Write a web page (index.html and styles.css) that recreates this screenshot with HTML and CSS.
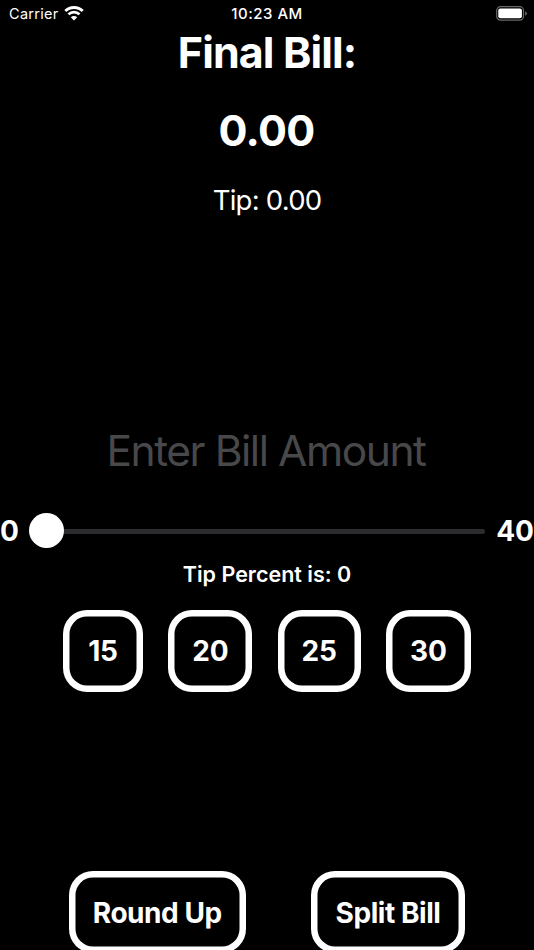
FILE: index.html
```html
<!DOCTYPE html>
<html lang="en">
<head>
<meta charset="utf-8">
<title>Tip Calculator</title>
<link rel="stylesheet" href="styles.css">
</head>
<body>
<main class="screen">
  <header class="status">
    <div class="network">
      <span class="carrier">Carrier</span>
      <svg class="wifi" viewBox="0 0 20 15" width="20" height="15">
        <path d="M1.3 5.1A12.3 12.3 0 0 1 18.7 5.1M4.5 8.4A7.6 7.6 0 0 1 15.5 8.4" fill="none" stroke="#fff" stroke-width="2.8"/>
        <path d="M6.8 11.3A4.6 4.6 0 0 1 13.2 11.3L10 14.6Z" fill="#fff"/>
      </svg>
    </div>
    <span class="clock">10:23 AM</span>
    <svg class="battery" viewBox="0 0 32 15" width="32" height="15">
      <rect x=".7" y=".7" width="26.8" height="13.4" rx="3.8" fill="none" stroke="#69696b" stroke-width="1.2"/>
      <rect x="2.3" y="2.5" width="23.6" height="9.8" rx="2" fill="#fff"/>
      <path d="M29.2 5.2Q31 6 31 7.4T29.2 9.7Z" fill="#69696b"/>
    </svg>
  </header>
  <h1 class="title">Final Bill:</h1>
  <div class="total">0.00</div>
  <div class="tip">Tip: 0.00</div>
  <div class="amount">Enter Bill Amount</div>
  <div class="slider">
    <span class="bound">0</span>
    <div class="track"><div class="thumb"></div></div>
    <span class="bound max">40</span>
  </div>
  <div class="percent">Tip Percent is: 0</div>
  <div class="presets">
    <div class="button p15">15</div>
    <div class="button p20">20</div>
    <div class="button p25">25</div>
    <div class="button p30">30</div>
  </div>
  <div class="actions">
    <div class="button round">Round Up</div>
    <div class="button split">Split Bill</div>
  </div>
</main>
</body>
</html>
```
FILE: styles.css
```css
* { box-sizing: border-box; }
body { margin: 0; background: #000; color: #fff; font-family: Inter, "Liberation Sans", sans-serif; }
.screen { width: 534px; height: 950px; overflow: hidden; display: flex; flex-direction: column; text-align: center; white-space: nowrap; }
.status { height: 28px; flex: none; display: grid; grid-template-columns: 1fr auto 1fr; align-items: center; padding: 0 6px 0 9px; font-size: 14.5px; line-height: 28px; }
.network { display: flex; align-items: center; gap: 5px; }
.carrier { letter-spacing: .3px; }
.wifi { margin-top: -2px; }
.clock { font-weight: 500; font-size: 15px; letter-spacing: .5px; margin-left: -3px; }
.battery { justify-self: end; margin-top: -2px; }
.title { margin: 0; height: 49px; flex: none; font-size: 43px; line-height: 49px; font-weight: 700; letter-spacing: -.9px; }
.total { margin-top: 28px; padding-right: 1px; height: 50px; flex: none; font-size: 43px; line-height: 50px; font-weight: 650; letter-spacing: -.7px; }
.tip { margin-top: 28px; height: 34px; flex: none; font-size: 27.5px; line-height: 34px; font-weight: 400; letter-spacing: -.75px; }
.amount { margin-top: 208px; padding-right: 2px; height: 52px; flex: none; font-size: 42.5px; line-height: 52px; font-weight: 370; letter-spacing: -1.45px; color: #48484a; }
.slider { margin-top: 35px; height: 36px; flex: none; display: flex; align-items: center; font-size: 28px; font-weight: 650; line-height: 36px; }
.bound { width: 29px; padding-top: 2px; text-align: left; }
.bound.max { width: 49px; text-align: right; }
.track { flex: 1; height: 5px; margin-top: 2px; border-radius: 3px; background: #2c2c2e; display: flex; align-items: center; }
.thumb { width: 35px; height: 35px; flex: none; margin: -2px 0 0 .2px; border-radius: 50%; background: #fff; }
.percent { margin-top: 13px; height: 26px; flex: none; font-size: 21.5px; line-height: 26px; font-weight: 600; }
.presets { margin-top: 22.5px; height: 82px; flex: none; display: flex; padding-left: 63px; gap: 25.3px; }
.button { height: 82px; flex: none; box-shadow: inset 0 0 0 6.5px #fff; border-radius: 24px; font-size: 28px; line-height: 83px; font-weight: 650; letter-spacing: -.2px; }
.p15 { width: 80px; }
.p20 { width: 84px; }
.p25 { width: 83px; }
.p30 { width: 85px; }
.actions { margin-top: 179.5px; flex: none; display: flex; padding-left: 69px; gap: 65.5px; }
.round, .split { letter-spacing: -.45px; line-height: 84px; }
.round { width: 176.5px; }
.split { width: 154px; }
```
